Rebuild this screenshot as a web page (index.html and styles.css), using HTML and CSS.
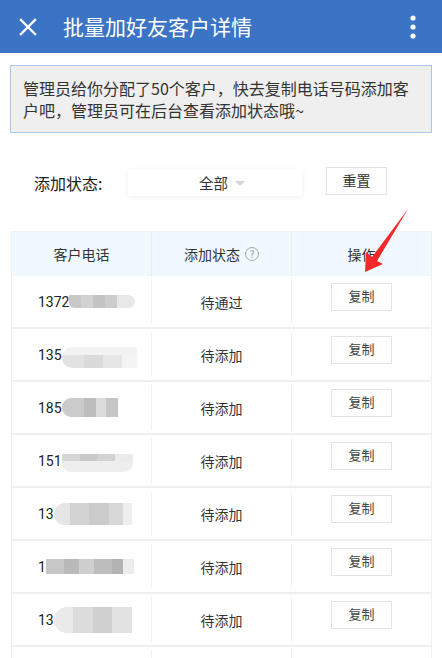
FILE: index.html
```html
<!DOCTYPE html>
<html lang="zh-CN">
<head>
<meta charset="utf-8">
<title>批量加好友客户详情</title>
<link rel="stylesheet" href="styles.css">
</head>
<body>
<div class="page">
  <header class="topbar">
    <svg class="close" width="18" height="18" viewBox="0 0 18 18"><path d="M2 2L16 16M16 2L2 16" stroke="#fff" stroke-width="2.4" stroke-linecap="square"/></svg>
    <h1 class="title">批量加好友客户详情</h1>
    <svg class="more" width="6" height="24" viewBox="0 0 6 24"><circle cx="3" cy="3" r="2.6" fill="#fff"/><circle cx="3" cy="12" r="2.6" fill="#fff"/><circle cx="3" cy="21" r="2.6" fill="#fff"/></svg>
  </header>

  <div class="notice">管理员给你分配了50个客户，快去复制电话号码添加客户吧，管理员可在后台查看添加状态哦~</div>

  <div class="filter">
    <span class="filter-label">添加状态:</span>
    <div class="select"><span>全部</span><i class="caret"></i></div>
    <button class="reset">重置</button>
  </div>

  <div class="table-wrap">
    <div class="table">
      <div class="row head">
        <div class="cell">客户电话</div>
        <div class="cell">添加状态 <span class="help">?</span></div>
        <div class="cell">操作</div>
      </div>
      <div class="row">
        <div class="cell phone">1372<span class="blur b1"></span></div>
        <div class="cell">待通过</div>
        <div class="cell"><button class="copy">复制</button></div>
      </div>
      <div class="row">
        <div class="cell phone">135<span class="blur b2"></span></div>
        <div class="cell">待添加</div>
        <div class="cell"><button class="copy">复制</button></div>
      </div>
      <div class="row">
        <div class="cell phone">185<span class="blur b3"></span></div>
        <div class="cell">待添加</div>
        <div class="cell"><button class="copy">复制</button></div>
      </div>
      <div class="row">
        <div class="cell phone">151<span class="blur b4"></span></div>
        <div class="cell">待添加</div>
        <div class="cell"><button class="copy">复制</button></div>
      </div>
      <div class="row">
        <div class="cell phone">13<span class="blur b5"></span></div>
        <div class="cell">待添加</div>
        <div class="cell"><button class="copy">复制</button></div>
      </div>
      <div class="row">
        <div class="cell phone">1<span class="blur b6"></span></div>
        <div class="cell">待添加</div>
        <div class="cell"><button class="copy">复制</button></div>
      </div>
      <div class="row">
        <div class="cell phone">13<span class="blur b7"></span></div>
        <div class="cell">待添加</div>
        <div class="cell"><button class="copy">复制</button></div>
      </div>
      <div class="row stub">
        <div class="cell"></div>
        <div class="cell"></div>
        <div class="cell"></div>
      </div>
    </div>
    <svg class="arrow" width="60" height="80" viewBox="0 0 60 80"><polygon points="58,0 27,52 33,55 15,63 16,43 22,48" fill="#f3282a"/></svg>
  </div>
</div>
</body>
</html>
```

FILE: styles.css
```css
* { box-sizing: border-box; }
html, body { margin: 0; padding: 0; background: #fff; }
body {
  font-family: "Noto Sans CJK SC", "Noto Sans", sans-serif;
  color: #333;
  width: 442px;
  height: 658px;
  overflow: hidden;
}
.page { display: flex; flex-direction: column; }

.topbar {
  height: 53px;
  background: #3b73c5;
  display: flex;
  align-items: center;
  padding: 0 26px 0 19px;
}
.close { flex: none; margin-top: 1px; }
.title {
  margin: 0 0 0 26px;
  font-size: 21px;
  font-weight: 400;
  color: #fff;
  flex: 1;
  line-height: 1;
}
.more { flex: none; }

.notice {
  margin: 12px 10px 0;
  height: 68px;
  background: #efefef;
  border: 1px solid #a9c9e9;
  padding: 11px 10px 0 12px;
  font-size: 16px;
  line-height: 22px;
  color: #333;
}

.filter {
  display: flex;
  align-items: center;
  height: 64px;
  margin-top: 18px;
  padding-left: 34px;
}
.filter-label { font-size: 16px; color: #222; width: 94px; }
.select {
  width: 174px;
  height: 27px;
  background: #fff;
  box-shadow: 0 1px 5px rgba(0,0,0,0.07);
  display: flex;
  align-items: center;
  justify-content: center;
  gap: 7px;
  font-size: 14.5px;
  color: #333;
  padding-left: 14px;
  margin-top: -2px;
}
.caret {
  width: 0; height: 0;
  border-left: 5px solid transparent;
  border-right: 5px solid transparent;
  border-top: 5px solid #d6d6d6;
  margin-top: 2px;
}
.reset {
  margin-left: 24px;
  width: 61px;
  height: 28px;
  background: #fff;
  border: 1px solid #e2e2e2;
  font-family: inherit;
  font-size: 14px;
  color: #333;
  padding: 0 0 3px;
  margin-top: -4px;
}

.table-wrap { position: relative; margin: 16px 10px 0 11px; }
.table { border-left: 1px solid #eef0f2; border-right: 1px solid #eef0f2; border-top: 1px solid #edf2f5; }
.row {
  display: grid;
  grid-template-columns: 140px 140px 1fr;
  height: 53px;
  border-bottom: 2px solid #efefef;
  align-items: center;
  font-size: 14px;
}
.row.head { height: 44px; background: #f0f9fd; border-bottom: none; color: #333; }
.cell {
  height: calc(100% - 6px);
  display: flex;
  align-items: center;
  justify-content: center;
  border-right: 1px solid #f0f0f0;
}
.cell:last-child { border-right: none; }
.row.head .cell { height: 100%; border-right-color: #e6eef2; }
.help {
  display: inline-flex;
  align-items: center;
  justify-content: center;
  width: 14px; height: 14px;
  border: 1px solid #aaa;
  border-radius: 50%;
  font-size: 10px;
  color: #999;
  margin-left: 5px;
  line-height: 1;
}
.phone {
  justify-content: flex-start;
  padding-left: 26px;
  font-family: Roboto, "Noto Sans", sans-serif;
  font-size: 14px;
  color: #222;
}
.blur {
  display: inline-block;
  height: 13px;
  border-radius: 0 7px 7px 6px;
  background: linear-gradient(to right, #c8c8c8 0 18%, #d2d2d2 18% 36%, #c4c4c4 36% 54%, #cdcdcd 54% 72%, #e8e8e8 72% 100%);
}
.b1 { width: 66px; }
.b2 { width: 75px; height: 21px; margin-top: 6px; border-radius: 10px 0 0 10px; background: linear-gradient(to bottom, #f2f2f2 0 40%, transparent 40%), linear-gradient(to right, #e2e2e2 0 30%, #dadada 30% 55%, #e6e6e6 55% 80%, #f4f4f4 80%); }
.b3 { width: 56px; height: 19px; border-radius: 9px 0 0 9px; background: linear-gradient(to right, #cbcbcb 0 40%, #bdbdbd 40% 60%, #dcdcdc 60% 78%, #c6c6c6 78%); }
.b4 { width: 71px; height: 18px; margin-top: 5px; border-radius: 0 0 9px 9px; background: linear-gradient(to bottom, transparent 0 40%, #eeeeee 40%), linear-gradient(to right, #d6d6d6 0 25%, #c9c9c9 25% 50%, #d2d2d2 50% 75%, #ebebeb 75%); }
.b5 { width: 78px; height: 22px; border-radius: 11px 0 0 11px; background: linear-gradient(to right, #e6e6e6 0 20%, #d3d3d3 20% 45%, #cbcbcb 45% 70%, #d8d8d8 70% 88%, #eeeeee 88%); }
.b6 { width: 88px; height: 15px; background: linear-gradient(to right, #c7c7c7 0 20%, #b9b9b9 20% 38%, #cfcfcf 38% 55%, #bdbdbd 55% 75%, #b3b3b3 75% 88%, #ececec 88%); border-radius: 0; }
.b7 { width: 78px; height: 26px; border-radius: 13px 0 0 13px; background: linear-gradient(to right, #eaeaea 0 25%, #dcdcdc 25% 50%, #d0d0d0 50% 75%, #e2e2e2 75%); }
.copy {
  width: 61px;
  height: 28px;
  background: #fff;
  border: 1px solid #e3e3e3;
  font-family: inherit;
  font-size: 13px;
  color: #444;
  padding: 0 0 4px;
  margin-top: -9px;
}
.arrow { position: absolute; left: 339px; top: -22px; }
```
